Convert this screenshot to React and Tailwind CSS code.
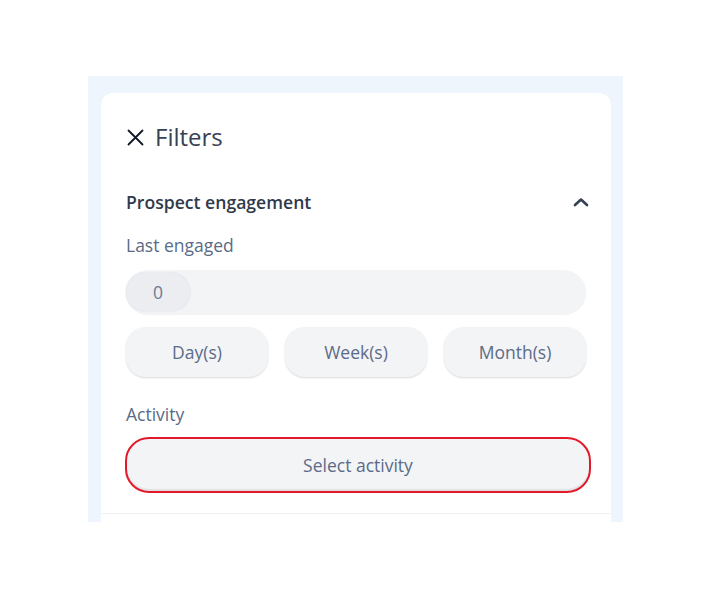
import React from "react";

export default function App() {
  return (
    <div className="w-[710px] h-[599px] bg-white" style={{ fontFamily: '"Open Sans", sans-serif' }}>
      <div className="pt-[76px] pl-[88px]">
        <div className="w-[535px] h-[446px] bg-[#eef5fc] pt-[17px] pl-[13px] pr-[12px] overflow-hidden">
          <div className="bg-white rounded-t-[12px] h-[500px]">
            <div className="px-[25px] pt-[29px]">
              <div className="flex items-center gap-[11px] h-[30px]">
                <svg width="17" height="17" viewBox="0 0 17 17" className="ml-[1px]">
                  <path d="M1.5 1.5 L15.5 15.5 M15.5 1.5 L1.5 15.5" stroke="#111827" strokeWidth="1.8" strokeLinecap="round" />
                </svg>
                <span className="text-[24px] leading-[30px] text-[#374151] font-medium">Filters</span>
              </div>
              <div className="flex items-center justify-between mt-[38px] h-[24px]">
                <span className="text-[17.6px] font-semibold text-[#2f3a4b]">Prospect engagement</span>
                <svg width="16" height="10" viewBox="0 0 16 10" className="mr-[-3px]">
                  <path d="M2 8 L8 2.5 L14 8" fill="none" stroke="#334155" strokeWidth="2.6" strokeLinecap="round" strokeLinejoin="round" />
                </svg>
              </div>
              <div className="mt-[19px] text-[17.5px] leading-[24px] text-[#5a6b86]">Last engaged</div>
              <div className="mt-[13px] h-[44px] w-[460px] rounded-full bg-[#f3f4f6] shadow-[0_1px_1px_rgba(0,0,0,0.06)] flex items-center">
                <div className="h-[38px] w-[64px] rounded-full bg-[#ebedf0] shadow-[0_0_2px_rgba(120,120,200,0.25)] flex items-center justify-center text-[17.5px] text-[#6b7c96]">0</div>
              </div>
              <div className="mt-[13px] grid grid-cols-3 gap-[17px] w-[460px]">
                {["Day(s)", "Week(s)", "Month(s)"].map((t) => (
                  <div key={t} className="h-[50px] rounded-[20px] bg-[#f3f4f6] shadow-[0_1px_2px_rgba(0,0,0,0.15)] flex items-center justify-center text-[17.5px] text-[#5b6b88]">{t}</div>
                ))}
              </div>
              <div className="mt-[25px] text-[17.5px] leading-[24px] text-[#5a6b86]">Activity</div>
              <div className="mt-[11px] ml-[-1px] h-[56px] w-[466px] rounded-[24px] border-2 border-[#e3192a] bg-[#f3f4f6] flex items-center justify-center text-[17.5px] text-[#5b6b88] shadow-[inset_0_-2px_1px_rgba(0,0,0,0.08)]">Select activity</div>
            </div>
            <div className="mt-[20px] border-t border-[#f1f2f4]"></div>
          </div>
        </div>
      </div>
    </div>
  );
}
